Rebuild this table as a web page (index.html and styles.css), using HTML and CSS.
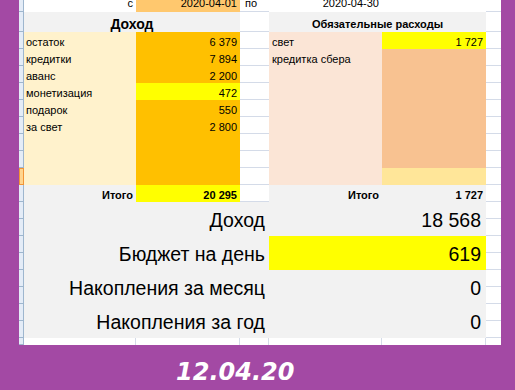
FILE: index.html
```html
<!DOCTYPE html>
<html lang="ru">
<head>
<meta charset="utf-8">
<title>Бюджет</title>
<link rel="stylesheet" href="styles.css">
</head>
<body>
<div class="sheet">
  <!-- row 1 -->
  <div class="rh"></div>
  <div class="c top num">с</div>
  <div class="c top num date-b">2020-04-01</div>
  <div class="c top gl po">по</div>
  <div class="c top num">2020-04-30</div>
  <div class="c top"></div>
  <div class="gl"></div>

  <!-- row 2: headers -->
  <div class="rh"></div>
  <div class="hdr hdr-big">Доход</div>
  <div class="gl"></div>
  <div class="hdr hdr-small">Обязательные расходы</div>
  <div class="gl"></div>

  <!-- data rows -->
  <div class="rh"></div>
  <div class="c inc-l">остаток</div>
  <div class="c num inc-v">6 379</div>
  <div class="gl"></div>
  <div class="c exp-l">свет</div>
  <div class="c num yel">1 727</div>
  <div class="gl"></div>

  <div class="rh"></div>
  <div class="c inc-l">кредитки</div>
  <div class="c num inc-v">7 894</div>
  <div class="gl"></div>
  <div class="c exp-l">кредитка сбера</div>
  <div class="c num exp-v"></div>
  <div class="gl"></div>

  <div class="rh"></div>
  <div class="c inc-l">аванс</div>
  <div class="c num inc-v">2 200</div>
  <div class="gl"></div>
  <div class="c exp-l"></div>
  <div class="c num exp-v"></div>
  <div class="gl"></div>

  <div class="rh"></div>
  <div class="c inc-l">монетизация</div>
  <div class="c num yel">472</div>
  <div class="gl"></div>
  <div class="c exp-l"></div>
  <div class="c num exp-v"></div>
  <div class="gl"></div>

  <div class="rh"></div>
  <div class="c inc-l">подарок</div>
  <div class="c num inc-v">550</div>
  <div class="gl"></div>
  <div class="c exp-l"></div>
  <div class="c num exp-v"></div>
  <div class="gl"></div>

  <div class="rh"></div>
  <div class="c inc-l">за свет</div>
  <div class="c num inc-v">2 800</div>
  <div class="gl"></div>
  <div class="c exp-l"></div>
  <div class="c num exp-v"></div>
  <div class="gl"></div>

  <div class="rh"></div>
  <div class="c inc-l"></div>
  <div class="c num inc-v"></div>
  <div class="gl"></div>
  <div class="c exp-l"></div>
  <div class="c num exp-v"></div>
  <div class="gl"></div>

  <div class="rh"></div>
  <div class="c inc-l"></div>
  <div class="c num inc-v"></div>
  <div class="gl"></div>
  <div class="c exp-l"></div>
  <div class="c num exp-v"></div>
  <div class="gl"></div>

  <div class="rh rh-sel"></div>
  <div class="c inc-l"></div>
  <div class="c num inc-v"></div>
  <div class="gl"></div>
  <div class="c exp-l"></div>
  <div class="c num lt"></div>
  <div class="gl"></div>

  <!-- totals -->
  <div class="rh"></div>
  <div class="c num gray bold">Итого</div>
  <div class="c num yel bold">20 295</div>
  <div class="gl"></div>
  <div class="c num gray bold">Итого</div>
  <div class="c num gray bold">1 727</div>
  <div class="gl"></div>

  <!-- summary -->
  <div class="rh"></div>
  <div class="sum-l">Доход</div>
  <div class="sum-v">18 568</div>
  <div class="gl"></div>
  <div class="rh"></div>
  <div class="gl"></div>

  <div class="rh"></div>
  <div class="sum-l">Бюджет на день</div>
  <div class="sum-v yel">619</div>
  <div class="gl"></div>
  <div class="rh"></div>
  <div class="gl"></div>

  <div class="rh"></div>
  <div class="sum-l">Накопления за месяц</div>
  <div class="sum-v">0</div>
  <div class="gl"></div>
  <div class="rh"></div>
  <div class="gl"></div>

  <div class="rh"></div>
  <div class="sum-l">Накопления за год</div>
  <div class="sum-v">0</div>
  <div class="gl"></div>
  <div class="rh"></div>
  <div class="gl"></div>

  <!-- bottom strip -->
  <div class="rh"></div>
  <div class="vl"></div>
  <div class="vl"></div>
  <div class="vl"></div>
  <div class="vl"></div>
  <div class="vl"></div>
  <div></div>
</div>
<div class="caption">12.04.20</div>
</body>
</html>
```

FILE: styles.css
```css
* {
  box-sizing: border-box;
  margin: 0;
  padding: 0;
}

body {
  margin: 0;
  width: 515px;
  height: 390px;
  overflow: hidden;
  background: #a349a4;
  font-family: "Liberation Sans", Arial, sans-serif;
}

.sheet {
  margin-left: 19px;
  width: 482px;
  height: 345px;
  background: #fff;
  display: grid;
  grid-template-columns: 5px 112px 104px 29px 113px 104px 15px;
  grid-template-rows: 12px 20px repeat(18, 17px) 7px;
  overflow: hidden;
  font-size: 11px;
  color: #000;
}

.rh {
  background: #e4ecf7;
  border-right: 1px solid #9eb6ce;
  border-bottom: 1px solid #9eb6ce;
}

.rh-sel {
  background: #ffd58f;
  border: 1px solid #f29436;
}

.gl {
  border-bottom: 1px solid #d4dbe8;
  background: #fff;
}

.vl {
  border-right: 1px solid #d4dbe8;
}

.c {
  padding: 4px 2px 0 2px;
  line-height: 13px;
  white-space: nowrap;
}

.top {
  padding-top: 0;
  line-height: 6px;
}

.po {
  padding-left: 5px;
}

.num {
  text-align: right;
  padding-right: 3px;
}

.bold {
  font-weight: bold;
}

.date-b {
  background: #ffc86e;
}

.inc-l {
  background: #fff2cc;
}

.inc-v {
  background: #ffc000;
}

.yel {
  background: #ffff00;
}

.exp-l {
  background: #fbe5d6;
  padding-left: 3px;
}

.exp-v {
  background: #f8c291;
}

.lt {
  background: #ffe699;
}

.gray {
  background: #f2f2f2;
}

.hdr {
  grid-column: span 2;
  background: #f2f2f2;
  font-weight: bold;
  text-align: center;
  white-space: nowrap;
}

.hdr-big {
  font-size: 14px;
  line-height: 16px;
  padding-top: 4px;
}

.hdr-small {
  font-size: 11px;
  line-height: 13px;
  padding-top: 6px;
}

.sum-l,
.sum-v {
  grid-row: span 2;
  background: #f2f2f2;
  font-size: 19.5px;
  line-height: 22px;
  padding-top: 7px;
  text-align: right;
  white-space: nowrap;
}

.sum-l {
  grid-column: span 3;
  padding-right: 4px;
}

.sum-v {
  grid-column: span 2;
  padding-right: 5px;
}

.sum-v.yel {
  background: #ffff00;
}

.caption {
  padding: 13px 0 0 176px;
  font-family: "DejaVu Sans", Verdana, sans-serif;
  font-weight: bold;
  font-style: italic;
  font-size: 24px;
  line-height: 28px;
  color: #fff;
}
```
